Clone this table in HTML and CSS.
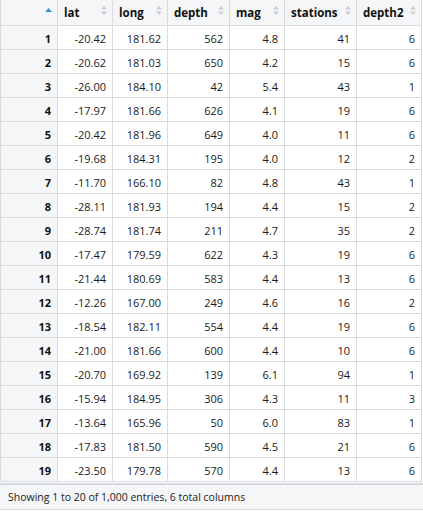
FILE: index.html
```html
<!DOCTYPE html>
<html>
<head>
<meta charset="utf-8">
<link rel="stylesheet" href="styles.css">
</head>
<body>
<div class="viewer">
  <div class="grid-wrap">
    <table class="grid">
      <colgroup>
        <col class="c-idx"><col class="c-55"><col class="c-55"><col class="c-62"><col class="c-55"><col class="c-72"><col class="c-65">
      </colgroup>
      <thead>
        <tr>
          <th class="idx-head"><div class="th-in"><span></span><svg class="sort-active" width="7" height="4" viewBox="0 0 7 4"><path d="M0 4 L3.5 0 L7 4 Z"/></svg></div></th>
          <th><div class="th-in"><span>lat</span><svg class="sort" width="6" height="9" viewBox="0 0 6 9"><path d="M0 3.5 L3 0 L6 3.5 Z"/><path d="M0 5.5 L3 9 L6 5.5 Z"/></svg></div></th>
          <th><div class="th-in"><span>long</span><svg class="sort" width="6" height="9" viewBox="0 0 6 9"><path d="M0 3.5 L3 0 L6 3.5 Z"/><path d="M0 5.5 L3 9 L6 5.5 Z"/></svg></div></th>
          <th><div class="th-in"><span>depth</span><svg class="sort" width="6" height="9" viewBox="0 0 6 9"><path d="M0 3.5 L3 0 L6 3.5 Z"/><path d="M0 5.5 L3 9 L6 5.5 Z"/></svg></div></th>
          <th><div class="th-in"><span>mag</span><svg class="sort" width="6" height="9" viewBox="0 0 6 9"><path d="M0 3.5 L3 0 L6 3.5 Z"/><path d="M0 5.5 L3 9 L6 5.5 Z"/></svg></div></th>
          <th><div class="th-in"><span>stations</span><svg class="sort" width="6" height="9" viewBox="0 0 6 9"><path d="M0 3.5 L3 0 L6 3.5 Z"/><path d="M0 5.5 L3 9 L6 5.5 Z"/></svg></div></th>
          <th><div class="th-in"><span>depth2</span><svg class="sort" width="6" height="9" viewBox="0 0 6 9"><path d="M0 3.5 L3 0 L6 3.5 Z"/><path d="M0 5.5 L3 9 L6 5.5 Z"/></svg></div></th>
        </tr>
      </thead>
      <tbody>
        <tr><td class="idx">1</td><td>-20.42</td><td>181.62</td><td>562</td><td>4.8</td><td>41</td><td>6</td></tr>
        <tr><td class="idx">2</td><td>-20.62</td><td>181.03</td><td>650</td><td>4.2</td><td>15</td><td>6</td></tr>
        <tr><td class="idx">3</td><td>-26.00</td><td>184.10</td><td>42</td><td>5.4</td><td>43</td><td>1</td></tr>
        <tr><td class="idx">4</td><td>-17.97</td><td>181.66</td><td>626</td><td>4.1</td><td>19</td><td>6</td></tr>
        <tr><td class="idx">5</td><td>-20.42</td><td>181.96</td><td>649</td><td>4.0</td><td>11</td><td>6</td></tr>
        <tr><td class="idx">6</td><td>-19.68</td><td>184.31</td><td>195</td><td>4.0</td><td>12</td><td>2</td></tr>
        <tr><td class="idx">7</td><td>-11.70</td><td>166.10</td><td>82</td><td>4.8</td><td>43</td><td>1</td></tr>
        <tr><td class="idx">8</td><td>-28.11</td><td>181.93</td><td>194</td><td>4.4</td><td>15</td><td>2</td></tr>
        <tr><td class="idx">9</td><td>-28.74</td><td>181.74</td><td>211</td><td>4.7</td><td>35</td><td>2</td></tr>
        <tr><td class="idx">10</td><td>-17.47</td><td>179.59</td><td>622</td><td>4.3</td><td>19</td><td>6</td></tr>
        <tr><td class="idx">11</td><td>-21.44</td><td>180.69</td><td>583</td><td>4.4</td><td>13</td><td>6</td></tr>
        <tr><td class="idx">12</td><td>-12.26</td><td>167.00</td><td>249</td><td>4.6</td><td>16</td><td>2</td></tr>
        <tr><td class="idx">13</td><td>-18.54</td><td>182.11</td><td>554</td><td>4.4</td><td>19</td><td>6</td></tr>
        <tr><td class="idx">14</td><td>-21.00</td><td>181.66</td><td>600</td><td>4.4</td><td>10</td><td>6</td></tr>
        <tr><td class="idx">15</td><td>-20.70</td><td>169.92</td><td>139</td><td>6.1</td><td>94</td><td>1</td></tr>
        <tr><td class="idx">16</td><td>-15.94</td><td>184.95</td><td>306</td><td>4.3</td><td>11</td><td>3</td></tr>
        <tr><td class="idx">17</td><td>-13.64</td><td>165.96</td><td>50</td><td>6.0</td><td>83</td><td>1</td></tr>
        <tr><td class="idx">18</td><td>-17.83</td><td>181.50</td><td>590</td><td>4.5</td><td>21</td><td>6</td></tr>
        <tr><td class="idx">19</td><td>-23.50</td><td>179.78</td><td>570</td><td>4.4</td><td>13</td><td>6</td></tr>
      </tbody>
    </table>
  </div>
  <div class="footer">Showing 1 to 20 of 1,000 entries, 6 total columns</div>
</div>
</body>
</html>
```

FILE: styles.css
```css
html, body {
  margin: 0;
  padding: 0;
  background: #ffffff;
}
body {
  font-family: "Open Sans", "Noto Sans", sans-serif;
  font-size: 11px;
  color: #1b1b1b;
}
.viewer {
  width: 423px;
  height: 510px;
  display: flex;
  flex-direction: column;
}
.grid-wrap {
  height: 483px;
  overflow: hidden;
  border-bottom: 1px solid #d5d8dc;
}
.grid {
  table-layout: fixed;
  border-collapse: separate;
  border-spacing: 0;
  width: 422px;
}
.c-idx { width: 58px; }
.c-55 { width: 55px; }
.c-62 { width: 62px; }
.c-72 { width: 72px; }
.c-65 { width: 65px; }
.grid th, .grid td {
  box-sizing: border-box;
  border-right: 1px solid #d9dcdf;
  border-bottom: 1px solid #d9dcdf;
  padding: 0;
  white-space: nowrap;
  overflow: hidden;
}
.grid th:first-child, .grid td:first-child {
  border-left: 1px solid #d9dcdf;
}
.grid th {
  height: 26px;
  background: #f4f6f8;
  font-weight: 700;
  text-align: left;
  vertical-align: top;
  color: #111;
  font-size: 11.5px;
}
.th-in {
  display: flex;
  justify-content: space-between;
  align-items: flex-start;
  padding: 5px 5px 0 6px;
  line-height: 16px;
}
.sort {
  fill: #c9cdd2;
  margin-top: 1px;
}
.idx-head .th-in {
  padding-top: 8px;
}
.sort-active {
  fill: #2f95dc;
}
.grid td {
  height: 24px;
  text-align: right;
  padding: 2px 6px 0 0;
  line-height: 20px;
  background: #ffffff;
}
.grid td.idx {
  background: #f4f6f8;
  font-weight: 700;
  color: #111;
}
.footer {
  flex: 1;
  background: #f4f6f8;
  border-top: 1px solid #d5d8dc;
  border-bottom: 1px solid #d9dcdf;
  padding: 0 0 0 8px;
  display: flex;
  align-items: center;
  font-size: 10.5px;
  color: #222;
}
```
